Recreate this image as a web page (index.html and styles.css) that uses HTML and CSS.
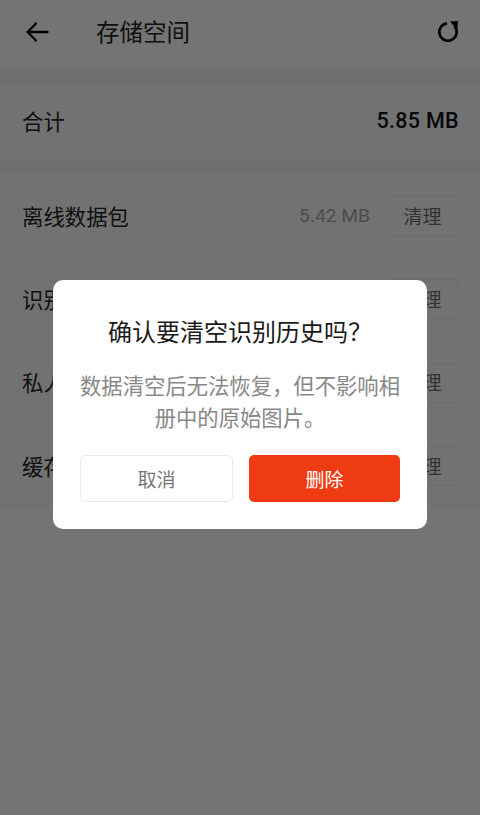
FILE: index.html
```html
<!DOCTYPE html>
<html lang="zh-CN">
<head>
<meta charset="utf-8">
<title>存储空间</title>
<link rel="stylesheet" href="styles.css">
</head>
<body>
<div class="page">
  <header class="topbar">
    <svg class="icon-back" viewBox="0 0 24 24" width="24" height="24" aria-hidden="true"><path d="M22.500 12H2.500M11 3.500 2.500 12l8.500 8.500" fill="none" stroke="#000" stroke-width="2.300" stroke-linecap="round" stroke-linejoin="round"/></svg>
    <h1 class="title">存储空间</h1>
    <svg class="icon-refresh" viewBox="0 0 24 24" width="24" height="24" aria-hidden="true"><path d="M11 3.360A8.700 8.700 0 1 0 18.300 6" fill="none" stroke="#000" stroke-width="2.600"/><path d="M14 1.500 22 1l-.8 9z" fill="#000"/></svg>
  </header>
  <section class="group total">
    <div class="row row-total"><span class="label">合计</span><span class="total-size">5.85 MB</span></div>
  </section>
  <section class="group">
    <div class="row"><span class="label">离线数据包</span><span class="size">5.42 MB</span><span class="clean">清理</span></div>
    <div class="row"><span class="label">识别历史</span><span class="size">0.31 MB</span><span class="clean">清理</span></div>
    <div class="row"><span class="label">私人相册</span><span class="size">0.12 MB</span><span class="clean">清理</span></div>
    <div class="row"><span class="label">缓存数据</span><span class="size">0.00 MB</span><span class="clean">清理</span></div>
  </section>
</div>
<div class="overlay">
  <div class="dialog">
    <h2 class="dialog-title">确认要清空识别历史吗&#xFF1F;</h2>
    <p class="dialog-body">数据清空后无法恢复&#xFF0C;但不影响相册中的原始图片。</p>
    <div class="dialog-actions">
      <button class="btn btn-cancel">取消</button>
      <button class="btn btn-delete">删除</button>
    </div>
  </div>
</div>
</body>
</html>
```
FILE: styles.css
```css
* { box-sizing: border-box; }
html, body { margin: 0; height: 100%; }
body {
  width: 480px;
  height: 815px;
  overflow: hidden;
  position: relative;
  background: #e9e9e9;
  font-family: "Noto Sans CJK SC", "Noto Sans", sans-serif;
  color: #111;
}
.page {
  height: 815px;
  background: #e9e9e9;
}
.topbar {
  height: 69px;
  background: #e9e9e9;
  display: flex;
  align-items: center;
  padding: 0 20px 5px 25px;
}
.icon-back { flex: none; }
.title {
  margin: 0 0 2px 47px;
  flex: 1;
  font-size: 23.500px;
  font-weight: 400;
  color: #222;
}
.group { background: #e5e5e5; }
.total {
  border-top: 16px solid #dedede;
  border-bottom: 15px solid #dedede;
}
.row {
  height: 83.330px;
  display: flex;
  align-items: center;
  padding: 0 21px 0 22px;
  border-bottom: 1px solid #dedede;
}
.row-total {
  height: 74px;
  padding-bottom: 4px;
  border-bottom: 0;
}
.label { flex: 1; font-size: 21.400px; color: #222; }
.total-size {
  font-family: Roboto, sans-serif;
  font-size: 21.500px;
  font-weight: 500;
  letter-spacing: 0.3px;
  color: #111;
}
.size {
  font-family: Roboto, sans-serif;
  font-size: 19.200px;
  margin: 1px 16px 0 0;
  color: #999;
}
.clean {
  width: 73px;
  height: 40px;
  margin-top: 2px;
  padding-bottom: 2px;
  border: 1px solid #d8d8d8;
  border-radius: 5px;
  display: flex;
  align-items: center;
  justify-content: center;
  font-size: 19px;
  color: #666;
}
.overlay {
  position: absolute;
  inset: 0;
  background: rgba(0, 0, 0, 0.5);
  display: flex;
  justify-content: center;
  align-items: flex-start;
  padding-top: 280px;
}
.dialog {
  width: 374px;
  height: 249px;
  background: #fff;
  border-radius: 10px;
  padding: 33px 27px 0;
}
.dialog-title {
  margin: 0;
  text-align: center;
  font-size: 24px;
  line-height: 36px;
  font-weight: 400;
  color: #1a1a1a;
}
.dialog-body {
  margin: 20px 0 0;
  text-align: center;
  font-size: 21.330px;
  line-height: 31.500px;
  color: #888;
}
.dialog-actions {
  display: flex;
  gap: 16px;
  margin-top: 23px;
}
.btn {
  flex: 1 1 0;
  min-width: 0;
  height: 47px;
  border-radius: 5px;
  font: inherit;
  font-size: 19px;
  padding: 0;
}
.btn-cancel { background: #fff; border: 1.500px solid #eaeaea; color: #777; }
.btn-delete { background: #ef3b14; border: 0; color: #fff; }
```
